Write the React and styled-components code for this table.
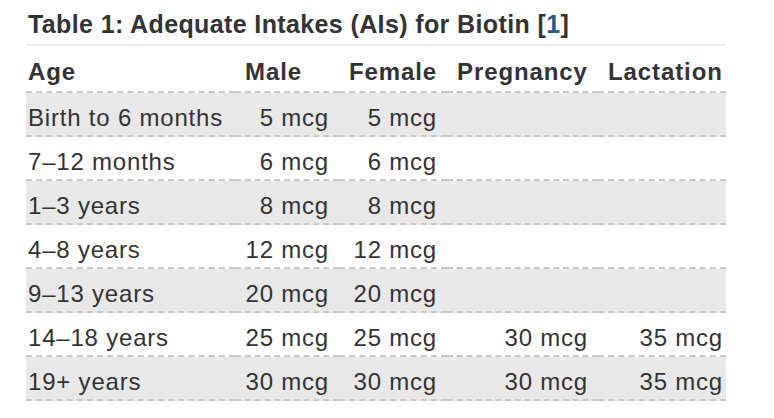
import React from "react";
import styled, { createGlobalStyle } from "styled-components";

const Global = createGlobalStyle`
  html, body { margin: 0; padding: 0; background: #fff; }
  body { font-family: "Liberation Sans", Arial, Helvetica, sans-serif; color: #333; }
`;

const Wrapper = styled.div`
  padding-left: 26px;
  width: 700px;
`;

const Title = styled.div`
  font-size: 25px;
  font-weight: bold;
  line-height: 30px;
  letter-spacing: 0.38px;
  padding: 9px 0 5px 2px;
  border-bottom: 2px solid #ececec;
  color: #333;
`;

const Ref = styled.a`
  color: #22598f;
  text-decoration: none;
`;

const Table = styled.table`
  width: 700px;
  table-layout: fixed;
  border-collapse: separate;
  border-spacing: 0;
`;

const Th = styled.th`
  font-size: 24px;
  font-weight: bold;
  letter-spacing: 0.9px;
  line-height: 28px;
  text-align: left;
  padding: 12px 10px 5px;
  border-bottom: 2px dashed #c8c8c8;
  white-space: nowrap;
  &:first-child { padding-left: 2px; }
  &:last-child { padding-right: 3px; }
`;

const Row = styled.tr`
  background: ${(p) => (p.$shaded ? "#e8e8e8" : "#fff")};
`;

const Td = styled.td`
  font-size: 24px;
  letter-spacing: 0.8px;
  line-height: 28px;
  padding: 11px 10px 3px;
  text-align: ${(p) => (p.$num ? "right" : "left")};
  border-bottom: 2px dashed #c8c8c8;
  white-space: nowrap;
  &:first-child { padding-left: 2px; }
  &:last-child { padding-right: 3px; }
`;

const cols = [209, 104, 108, 151, 128];

const rows = [
  ["Birth to 6 months", "5 mcg", "5 mcg", "", ""],
  ["7–12 months", "6 mcg", "6 mcg", "", ""],
  ["1–3 years", "8 mcg", "8 mcg", "", ""],
  ["4–8 years", "12 mcg", "12 mcg", "", ""],
  ["9–13 years", "20 mcg", "20 mcg", "", ""],
  ["14–18 years", "25 mcg", "25 mcg", "30 mcg", "35 mcg"],
  ["19+ years", "30 mcg", "30 mcg", "30 mcg", "35 mcg"],
];

export default function App() {
  return (
    <Wrapper>
      <Global />
      <Title>
        Table 1: Adequate Intakes (AIs) for Biotin [<Ref href="#">1</Ref>]
      </Title>
      <Table>
        <colgroup>
          {cols.map((w, i) => (
            <col key={i} style={{ width: w }} />
          ))}
        </colgroup>
        <thead>
          <tr>
            <Th>Age</Th>
            <Th>Male</Th>
            <Th>Female</Th>
            <Th>Pregnancy</Th>
            <Th>Lactation</Th>
          </tr>
        </thead>
        <tbody>
          {rows.map((r, i) => (
            <Row key={i} $shaded={i % 2 === 0}>
              {r.map((c, j) => (
                <Td key={j} $num={j > 0}>
                  {c}
                </Td>
              ))}
            </Row>
          ))}
        </tbody>
      </Table>
    </Wrapper>
  );
}
